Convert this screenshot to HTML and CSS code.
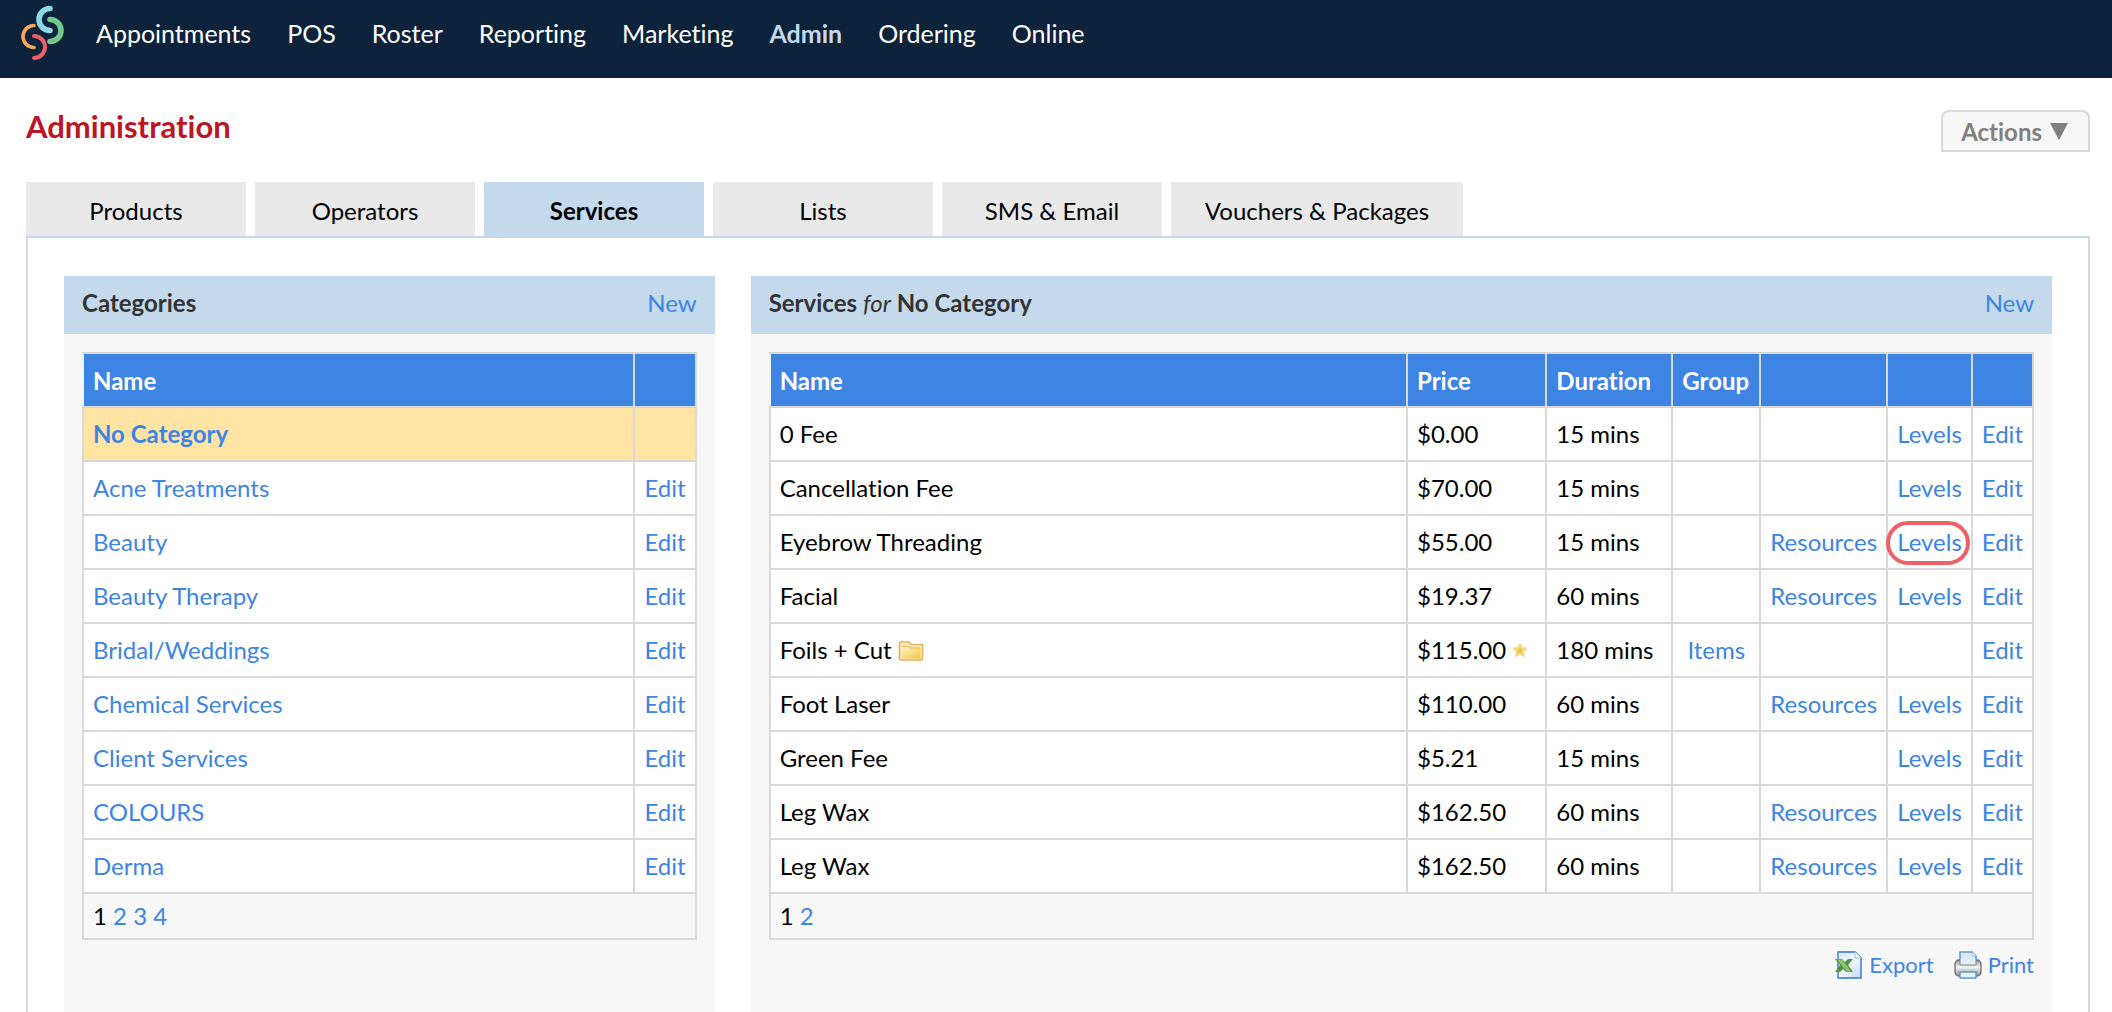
FILE: index.html
```html
<!DOCTYPE html>
<html lang="en">
<head>
    <meta charset="UTF-8">
    <meta name="viewport" content="width=device-width, initial-scale=1.0">
    <title>Administration - Services</title>
    <link rel="stylesheet" href="styles.css">
</head>
<body>
    <!-- Top navigation -->
    <header class="topbar">
        <a href="#" class="logo" aria-label="Home">
            <svg width="44" height="56" viewBox="0 0 44 56" fill="none" stroke-linecap="round">
                <path d="M29 3.500a11 11 0 0 0 0 22" stroke="#8fd9e6" stroke-width="5.600"/>
                <path d="M29 14.500a11 11 0 0 1 0 22" stroke="#71ca8c" stroke-width="5.600"/>
                <path d="M13 20.500a11 11 0 0 0 0 22" stroke="#f9a85a" stroke-width="3.600"/>
                <path d="M13 31a11 11 0 0 1 0 22" stroke="#ee6068" stroke-width="4"/>
            </svg>
        </a>
        <nav class="menu">
            <a href="#">Appointments</a>
            <a href="#">POS</a>
            <a href="#">Roster</a>
            <a href="#">Reporting</a>
            <a href="#">Marketing</a>
            <a href="#" class="current">Admin</a>
            <a href="#">Ordering</a>
            <a href="#">Online</a>
        </nav>
    </header>

    <main class="page">
        <div class="page-head">
            <h1>Administration</h1>
            <button type="button" class="actions">Actions
                <svg width="18" height="18" viewBox="0 0 18 18"><path d="M0 1h18L9 18z" fill="#808080"/></svg>
            </button>
        </div>

        <nav class="tabs">
            <a href="#">Products</a>
            <a href="#">Operators</a>
            <a href="#" class="active">Services</a>
            <a href="#">Lists</a>
            <a href="#">SMS &amp; Email</a>
            <a href="#" class="wide">Vouchers &amp; Packages</a>
        </nav>

        <div class="content">
            <!-- Categories -->
            <section class="panel">
                <div class="panel-head">
                    <h2>Categories</h2>
                    <a href="#">New</a>
                </div>
                <div class="panel-body">
                    <table>
                        <thead>
                            <tr><th class="name">Name</th><th></th></tr>
                        </thead>
                        <tbody>
                            <tr class="selected"><td><a href="#">No Category</a></td><td></td></tr>
                            <tr><td><a href="#">Acne Treatments</a></td><td><a href="#">Edit</a></td></tr>
                            <tr><td><a href="#">Beauty</a></td><td><a href="#">Edit</a></td></tr>
                            <tr><td><a href="#">Beauty Therapy</a></td><td><a href="#">Edit</a></td></tr>
                            <tr><td><a href="#">Bridal/Weddings</a></td><td><a href="#">Edit</a></td></tr>
                            <tr><td><a href="#">Chemical Services</a></td><td><a href="#">Edit</a></td></tr>
                            <tr><td><a href="#">Client Services</a></td><td><a href="#">Edit</a></td></tr>
                            <tr><td><a href="#">COLOURS</a></td><td><a href="#">Edit</a></td></tr>
                            <tr><td><a href="#">Derma</a></td><td><a href="#">Edit</a></td></tr>
                        </tbody>
                        <tfoot>
                            <tr><td colspan="2">1 <a href="#">2</a> <a href="#">3</a> <a href="#">4</a></td></tr>
                        </tfoot>
                    </table>
                </div>
            </section>

            <!-- Services -->
            <section class="panel">
                <div class="panel-head">
                    <h2>Services <em>for</em> No Category</h2>
                    <a href="#">New</a>
                </div>
                <div class="panel-body">
                    <table>
                        <thead>
                            <tr>
                                <th class="name">Name</th>
                                <th>Price</th>
                                <th class="duration">Duration</th>
                                <th class="group">Group</th>
                                <th></th>
                                <th></th>
                                <th></th>
                            </tr>
                        </thead>
                        <tbody>
                            <tr>
                                <td>0 Fee</td><td>$0.00</td><td>15 mins</td><td></td>
                                <td></td><td><a href="#">Levels</a></td><td><a href="#">Edit</a></td>
                            </tr>
                            <tr>
                                <td>Cancellation Fee</td><td>$70.00</td><td>15 mins</td><td></td>
                                <td></td><td><a href="#">Levels</a></td><td><a href="#">Edit</a></td>
                            </tr>
                            <tr>
                                <td>Eyebrow Threading</td><td>$55.00</td><td>15 mins</td><td></td>
                                <td><a href="#">Resources</a></td><td><a href="#" class="marked">Levels</a></td><td><a href="#">Edit</a></td>
                            </tr>
                            <tr>
                                <td>Facial</td><td>$19.37</td><td>60 mins</td><td></td>
                                <td><a href="#">Resources</a></td><td><a href="#">Levels</a></td><td><a href="#">Edit</a></td>
                            </tr>
                            <tr>
                                <td>Foils + Cut
                                    <svg class="folder" width="26" height="20" viewBox="0 0 26 20">
                                        <defs>
                                            <linearGradient id="folderFill" x1="0" y1="0" x2="1" y2="1">
                                                <stop offset="0" stop-color="#fff6cf"/>
                                                <stop offset="1" stop-color="#f3c53c"/>
                                            </linearGradient>
                                        </defs>
                                        <path d="M1.500 18V2q0-1 1-1H11l2 2.500h10.500q1 0 1 1V18q0 1-1 1h-21q-1 0-1-1z" fill="#fdeebb" stroke="#e9ae5c" stroke-width="1.600"/>
                                        <path d="M3.500 17.500V8h8l2-2h9v11.500z" fill="url(#folderFill)"/>
                                        <path d="M4 5.500h7l1 1.500h10" fill="none" stroke="#e8b668" stroke-width="1.200"/>
                                    </svg>
                                </td>
                                <td>$115.00
                                    <svg class="star" width="16" height="16" viewBox="0 0 16 16">
                                        <path d="M8 2l1.900 3.900 4.300.600-3.100 3 .800 4.300L8 11.800l-3.900 2 .800-4.300-3.100-3 4.300-.600z" fill="#f5c84c" stroke="#f7da88" stroke-width="2" stroke-linejoin="round"/>
                                    </svg>
                                </td>
                                <td>180 mins</td><td><a href="#">Items</a></td>
                                <td></td><td></td><td><a href="#">Edit</a></td>
                            </tr>
                            <tr>
                                <td>Foot Laser</td><td>$110.00</td><td>60 mins</td><td></td>
                                <td><a href="#">Resources</a></td><td><a href="#">Levels</a></td><td><a href="#">Edit</a></td>
                            </tr>
                            <tr>
                                <td>Green Fee</td><td>$5.21</td><td>15 mins</td><td></td>
                                <td></td><td><a href="#">Levels</a></td><td><a href="#">Edit</a></td>
                            </tr>
                            <tr>
                                <td>Leg Wax</td><td>$162.50</td><td>60 mins</td><td></td>
                                <td><a href="#">Resources</a></td><td><a href="#">Levels</a></td><td><a href="#">Edit</a></td>
                            </tr>
                            <tr>
                                <td>Leg Wax</td><td>$162.50</td><td>60 mins</td><td></td>
                                <td><a href="#">Resources</a></td><td><a href="#">Levels</a></td><td><a href="#">Edit</a></td>
                            </tr>
                        </tbody>
                        <tfoot>
                            <tr><td colspan="7">1 <a href="#">2</a></td></tr>
                        </tfoot>
                    </table>

                    <div class="tools">
                        <a href="#">
                            <svg width="28" height="28" viewBox="0 0 28 28">
                                <defs>
                                    <linearGradient id="sheetFill" x1="0" y1="0" x2="1" y2="1">
                                        <stop offset="0" stop-color="#cfe3fa"/>
                                        <stop offset=".5" stop-color="#f2f8ff"/>
                                        <stop offset="1" stop-color="#bdd8f5"/>
                                    </linearGradient>
                                </defs>
                                <path d="M3 1h17l6 6v20H3z" fill="url(#sheetFill)" stroke="#5f92d0" stroke-width="1.800" stroke-linejoin="round"/>
                                <path d="M20 1v6h6" fill="#fff" stroke="#9dbde4"/>
                                <path d="M0 8h7l3 3 3-3h5l-5 6 5 7h-7l-3-3-3 3H0l5-7z" fill="#4f9440"/>
                                <path d="M2 8.500h5l9 12h-4z" fill="#8dc573"/>
                            </svg>
                            Export
                        </a>
                        <a href="#">
                            <svg width="28" height="28" viewBox="0 0 28 28">
                                <defs>
                                    <linearGradient id="printerFill" x1="0" y1="0" x2="0" y2="1">
                                        <stop offset="0" stop-color="#8e8e8e"/>
                                        <stop offset=".45" stop-color="#f4f4f4"/>
                                        <stop offset="1" stop-color="#8b8b8b"/>
                                    </linearGradient>
                                </defs>
                                <path d="M6 14V1h12l4 4v9z" fill="#dcebfb" stroke="#5f98d8" stroke-width="1.600" stroke-linejoin="round"/>
                                <path d="M18 1v4h4" fill="#fff" stroke="#8fb6e2"/>
                                <rect x="1" y="9" width="26" height="16" rx="4" fill="url(#printerFill)" stroke="#777" stroke-width="1.400"/>
                                <path d="M6 8v6h16V8" fill="#dfedfb" stroke="#8a8a8a"/>
                                <path d="M6 21h16v6H6z" fill="#e6f2ff" stroke="#5f98d8" stroke-width="1.400"/>
                            </svg>
                            Print
                        </a>
                    </div>
                </div>
            </section>
        </div>
    </main>
</body>
</html>
```

FILE: styles.css
```css
* {
    box-sizing: border-box;
}

body {
    display: flex;
    flex-direction: column;
    min-height: 100vh;
    margin: 0;
    background-color: #fff;
    color: #000;
    font-family: Lato, "Liberation Sans", sans-serif;
    font-size: 24px;
    font-variant-ligatures: none;
    line-height: 30px;
}

a {
    color: #3e84e3;
    text-decoration: none;
}

/* Top navigation */
.topbar {
    display: flex;
    align-items: flex-start;
    gap: 31px;
    height: 78px;
    padding: 5px 21px;
    background-color: #0d233c;
}

.logo svg {
    display: block;
}

.menu {
    display: flex;
    gap: 36px;
    padding-top: 13px;
    font-size: 25px;
}

.menu a {
    color: #fff;
}

.menu .current {
    color: #c4daec;
    font-weight: bold;
}

/* Page heading */
.page {
    display: flex;
    flex-direction: column;
    flex: 1;
    padding: 32px 22px 0 26px;
}

.page-head {
    display: flex;
    justify-content: space-between;
    align-items: flex-start;
    height: 72px;
}

h1 {
    margin: 0;
    color: #bb1526;
    font-size: 31px;
    line-height: 32px;
}

.actions {
    display: flex;
    align-items: center;
    gap: 8px;
    height: 42px;
    padding: 0 20px 0 18px;
    border: 2px solid #d8d8d8;
    border-radius: 8px 8px 0 0;
    background-color: #f7f7f7;
    color: #808080;
    font-family: inherit;
    font-size: 24px;
    font-variant-ligatures: none;
    font-weight: bold;
}

/* Tabs */
.tabs {
    display: flex;
    gap: 9px;
}

.tabs a {
    width: 220px;
    padding: 14px 0 10px;
    background-color: #e9e9e9;
    color: #000;
    text-align: center;
}

.tabs .wide {
    width: 292px;
}

.tabs .active {
    background-color: #c4daec;
    font-weight: bold;
}

/* Panels */
.content {
    display: grid;
    grid-template-columns: 1fr 2fr;
    gap: 36px;
    flex: 1;
    padding: 38px 36px 0;
    border: 2px solid #d8d8d8;
    border-top-color: #c4daec;
    border-bottom: none;
}

.panel {
    background-color: #f7f7f7;
}

.panel-head {
    display: flex;
    justify-content: space-between;
    padding: 12px 18px 16px;
    background-color: #c4daec;
}

h2 {
    margin: 0;
    color: #333;
    font-size: 24px;
    line-height: 30px;
}

h2 em {
    font-weight: normal;
}

.panel-body {
    padding: 18px;
}

/* Tables */
table {
    width: 100%;
    border-collapse: collapse;
}

th,
td {
    padding: 11px 9px;
    border: 2px solid #d8d8d8;
    text-align: left;
    white-space: nowrap;
}

th {
    padding: 12px 9px 10px;
    height: 54px;
    background-color: #3e84e3;
    color: #fff;
}

th:first-child {
    border-left-color: #eef4fb;
}

th.name {
    width: 100%;
}

th.duration {
    min-width: 126px;
}

th.group {
    min-width: 88px;
}

tbody td {
    background-color: #fff;
}

tbody td:nth-child(n+4) {
    text-align: center;
}

.selected td {
    background-color: #ffe4a4;
    font-weight: bold;
}

tfoot td {
    padding: 7px 9px;
}

.folder {
    vertical-align: -2px;
}

.star {
    margin-right: 8px;
    vertical-align: 1px;
}

/* Red ring round the highlighted link */
.marked {
    position: relative;
}

.marked::after {
    content: "";
    position: absolute;
    inset: -6px -8px -9px -11px;
    border: 4px solid #ee6068;
    border-radius: 22px;
}

.tools {
    display: flex;
    justify-content: flex-end;
    gap: 20px;
    padding-top: 10px;
    font-size: 22px;
}

.tools a {
    display: flex;
    align-items: center;
    gap: 6px;
}
```
